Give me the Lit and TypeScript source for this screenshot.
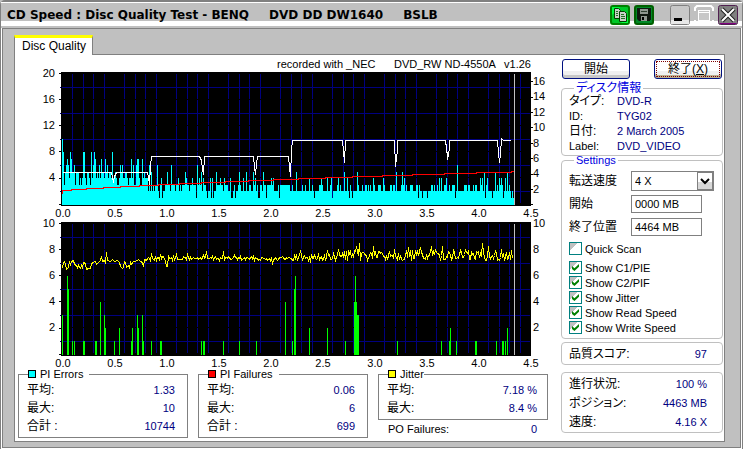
import { LitElement, html, css, svg } from "lit";
import { customElement, property } from "lit/decorators.js";

type Pair = [number, number];

/* Small repeatable generator, so the sampled noise is the same on each load. */
function makeRandom(seed: number) {
  let s = seed;
  return () => {
    s = (s * 1103515245 + 12345) % 2147483648;
    return s / 2147483648;
  };
}

const X0 = 62;
const UNIT = 104;
const TOP1 = 73;
const ZERO1 = 204;
const TOP2 = 223;
const ZERO2 = 354;

const PIE_PEAKS: Pair[] = [
  [62, 10], [63, 8], [64, 3], [66, 6], [67, 7], [68, 6], [70, 8], [71, 7], [74, 6], [78, 5],
  [83, 8], [84, 8], [86, 3], [88, 5], [91, 8], [93, 6], [94, 8], [95, 7], [97, 5], [99, 6],
  [101, 7], [103, 5], [105, 7], [107, 6], [110, 5], [112, 8], [115, 5], [118, 3], [120, 6],
  [122, 6], [126, 5], [128, 3], [131, 7], [133, 6], [136, 6], [137, 7], [138, 7], [140, 3],
  [142, 7], [144, 5], [149, 6], [151, 5], [157, 6], [159, 1], [161, 4], [167, 5], [171, 6],
  [178, 4], [185, 5], [186, 4], [192, 4], [197, 6], [199, 4], [201, 5], [203, 4], [210, 4],
  [212, 4], [216, 5], [220, 4], [224, 4], [230, 4], [235, 1], [239, 5], [243, 4], [246, 5],
  [253, 5], [255, 4], [263, 5], [271, 4], [273, 4], [281, 3], [296, 5], [309, 4], [321, 4],
  [327, 4], [331, 4], [338, 4], [344, 5], [347, 4], [357, 5], [373, 4], [383, 4], [396, 5],
  [402, 5], [404, 4], [439, 4], [441, 4], [446, 4], [457, 6], [480, 4], [482, 4], [484, 5],
  [487, 4], [495, 5], [499, 4], [501, 4], [505, 4], [507, 5], [511, 1], [513, 1], [514, 1],
];

const PIF_BARS: Pair[] = [
  [62, 3], [67, 6], [68, 5], [72, 1], [74, 1], [83, 1], [84, 1], [95, 1], [96, 1], [100, 4],
  [104, 3], [105, 2], [114, 1], [119, 2], [131, 1], [132, 2], [137, 3], [138, 2], [142, 3],
  [143, 1], [151, 1], [160, 1], [161, 1], [201, 1], [203, 1], [204, 1], [223, 1], [239, 1],
  [256, 1], [285, 4], [292, 1], [294, 5], [295, 6], [309, 2], [327, 2], [345, 1], [354, 4],
  [355, 6], [356, 4], [357, 3], [358, 3], [397, 1], [441, 1], [449, 1], [450, 2], [456, 1],
  [475, 1], [476, 1], [496, 1], [502, 1], [503, 1], [505, 1], [507, 2],
];

const JITTER_START: Pair[] = [
  [62, 268], [63, 262], [64, 261], [65, 264], [66, 269], [68, 267], [69, 261], [70, 264],
  [71, 261], [73, 260], [74, 264], [76, 265], [77, 267], [78, 265], [79, 267], [80, 268],
  [81, 265], [82, 267], [83, 262], [85, 263], [86, 269], [88, 268], [90, 268], [91, 264],
  [92, 262], [95, 261], [96, 264], [98, 262], [100, 260], [101, 256], [102, 261], [104, 260],
  [105, 262], [106, 252], [107, 260], [110, 261], [112, 259], [114, 261], [117, 260],
  [119, 262], [120, 266], [122, 268], [123, 267], [124, 261], [125, 262], [126, 267],
  [128, 265], [129, 267], [130, 262], [131, 264], [133, 261], [135, 261], [138, 259],
  [140, 261], [142, 262], [143, 266], [144, 259], [146, 260],
];

const JITTER_PEAKS = new Map<number, number>([
  [151, 253], [160, 254], [166, 266], [167, 266], [176, 254], [187, 254], [203, 254], [206, 251],
  [223, 251], [234, 255], [272, 263], [300, 251], [310, 262], [327, 250], [338, 249], [356, 246],
  [359, 243], [373, 246], [394, 249], [408, 247], [420, 247], [431, 246], [442, 246], [465, 250],
  [482, 243], [488, 246], [501, 249], [508, 258], [510, 259], [512, 258],
]);

const WHITE_LINE =
  "62,172 111,172 113,182 114,176 116,172 147,172 148,177 149,184 150,165 151,156 199,156 " +
  "201,160 202,168 203,174 204,156 253,156 254,166 255,174 256,164 257,156 288,156 289,166 " +
  "290,176 291,150 292,140 342,140 343,150 344,162 345,140 394,140 395,166 397,150 397,140 " +
  "445,140 447,156 447,159 449,148 449,140 497,140 498,152 499,162 500,154 501,138 503,140 510,140";

const RED_STEPS: Pair[] = [
  [62, 190], [71, 189], [86, 188], [103, 187], [120, 186], [139, 185], [158, 184], [179, 183],
  [201, 182], [225, 181], [248, 180], [273, 179], [298, 178], [325, 177], [352, 176],
  [382, 175], [412, 174], [444, 173], [476, 172], [511, 171],
];

function pieHeights(): Pair[] {
  const random = makeRandom(41);
  const peaks = new Map(PIE_PEAKS);
  const out: Pair[] = [];
  for (let x = X0; x <= 514; x++) {
    const r = random();
    let v: number;
    if (x < 128) v = r < 0.2 ? 3 : r < 0.7 ? 4 : 5;
    else if (x < 148) v = r < 0.35 ? 3 : 4;
    else if (x < 290) v = r < 0.5 ? 3 : r < 0.9 ? 2 : 1;
    else v = r < 0.3 ? 3 : r < 0.95 ? 2 : 1;
    out.push([x, peaks.get(x) ?? v]);
  }
  return out;
}

function jitterPoints(): string {
  const random = makeRandom(7);
  const pts: Pair[] = [...JITTER_START];
  for (let x = 147; x <= 512; x++) {
    const low = x < 290 ? 258 : x < 340 ? 257 : 255;
    const amp = x < 290 ? 4 : x < 340 ? 8 : 10;
    const y = Math.round(low + (random() - 0.5) * amp);
    pts.push([x, JITTER_PEAKS.get(x) ?? y]);
  }
  return pts.map((p) => p.join(",")).join(" ");
}

function barPath(bars: Pair[], zero: number, scale: number): string {
  return bars
    .map(([x, v]) => {
      const top = Math.round(zero - v * scale);
      return `M${x} ${zero + 1}V${top}h1V${zero + 1}z`;
    })
    .join("");
}

@customElement("disc-charts")
export class DiscCharts extends LitElement {
  static styles = css`
    :host { display: block; }
    svg { display: block; width: 100%; height: auto; overflow: visible; }
    text { font: 11px "Liberation Sans", Arial, sans-serif; fill: #000; }
    .end { text-anchor: end; }
    .mid { text-anchor: middle; }
    .plot { fill: #000; }
    .grid { stroke: #000080; fill: none; }
    .cols { stroke: #000080; fill: none; stroke-dasharray: 25 1; }
    .tick { stroke: #000; }
    .minor { stroke: #000080; }
    .pie { fill: #0ff; }
    .pif { fill: #0f0; }
    .speed { fill: none; stroke: #fff; }
    .read { fill: none; stroke: #f00; }
    .jitter { fill: none; stroke: #ff0; }
    .marker { stroke: #c0c0c0; }
  `;

  private plot(top: number, zero: number) {
    const columns: number[] = [];
    for (let i = 1; i < 45; i++) if (i % 5 !== 0) columns.push(Math.round(X0 + (i * UNIT) / 10) + 0.5);
    const rows = [14, 40, 66, 92, 118].map((d) => top + d + 0.5);
    const labels = ["0.0", "0.5", "1.0", "1.5", "2.0", "2.5", "3.0", "3.5", "4.0", "4.5"];
    return svg`
      <rect class="plot" x="61" y=${top - 1} width="470" height=${zero - top + 3}></rect>
      <path class="cols" shape-rendering="crispEdges" d=${columns.map((x) => `M${x} ${top + 1}V${zero}`).join("")}></path>
      <path class="grid" shape-rendering="crispEdges" d=${rows.map((y) => `M62 ${y}H530`).join("")}></path>
      <path class="minor" shape-rendering="crispEdges" d=${rows.map((y) => `M60 ${y}h1`).join("")}></path>
      <path class="tick" shape-rendering="crispEdges"
        d=${[0, 26, 52, 78, 105, 131].map((d) => `M59 ${top + d + 0.5}h2`).join("")}></path>
      ${labels.map((t, i) => svg`<text class="mid" x=${63 + i * 52} y=${zero + 13}>${t}</text>`)}`;
  }

  private scale(values: number[], x: number, first: number, step: number, side: string) {
    return values.map(
      (v, i) => svg`<text class=${side} x=${x} y=${Math.round(first + i * step)}>${v}</text>`
    );
  }

  render() {
    const red =
      "62,193 " +
      RED_STEPS.map(([x, y], i) => `${x},${y} ${RED_STEPS[i + 1]?.[0] ?? 513},${y}`).join(" ");
    const rightTicks = [81, 97, 112, 127, 143, 158, 174, 189, 204];
    return html`
      <svg viewBox="15 55 540 312" role="img" aria-label="PI errors, PI failures and jitter over disc position">
        <text x="277" y="68">recorded with _NEC</text>
        <text x="394" y="68">DVD_RW ND-4550A</text>
        <text class="end" x="531" y="68">v1.26</text>
        ${this.plot(TOP1, ZERO1)}
        ${this.scale([20, 16, 12, 8, 4], 55, 77, 26, "end")}
        ${this.scale([16, 14, 12, 10, 8, 6, 4, 2], 533, 85, 15.4, "")}
        <path class="tick" shape-rendering="crispEdges" d=${rightTicks.map((y) => `M531 ${y}.5h2`).join("")}></path>
        <path class="pie" shape-rendering="crispEdges" d=${barPath(pieHeights(), ZERO1, 6.5)}></path>
        <g transform="translate(0.5 0.5)" shape-rendering="crispEdges">
          <polyline class="read" points=${red}></polyline>
          <polyline class="speed" points=${WHITE_LINE}></polyline>
          <line class="marker" x1="514" x2="514" y1=${TOP1} y2=${ZERO1}></line>
        </g>
        ${this.plot(TOP2, ZERO2)}
        ${this.scale([10, 8, 6, 4, 2], 55, 227, 26, "end")}
        ${this.scale([10, 8, 6, 4, 2], 533, 227, 26, "")}
        <path class="pif" shape-rendering="crispEdges" d=${barPath(PIF_BARS, ZERO2, 13)}></path>
        <g transform="translate(0.5 0.5)" shape-rendering="crispEdges">
          <polyline class="jitter" points=${jitterPoints()}></polyline>
          <line class="marker" x1="514" x2="514" y1=${TOP2} y2=${ZERO2}></line>
        </g>
      </svg>`;
  }
}

@customElement("stat-group")
export class StatGroup extends LitElement {
  @property() caption = "";
  @property() tone = "cyan";
  @property({ type: Boolean }) wide = false;
  @property({ attribute: false }) rows: [string, string][] = [];

  static styles = css`
    :host { display: block; }
    fieldset { margin: 0; padding: 0 12px 2px 8px; border: 1px solid #808080; min-width: 0; }
    legend {
      display: flex; align-items: center; gap: 4px; height: 14px; padding: 0; margin-left: 1px;
      background: #fff;
    }
    .wide { padding-right: 10px; }
    .spaced { padding-right: 6px; }
    .swatch { width: 6px; height: 6px; border: 1px solid #000; }
    .cyan { background: #0ff; }
    .red { background: #f00; }
    .yellow { background: #ff0; }
    dl { margin: 0; }
    .row { display: flex; justify-content: space-between; align-items: center; height: 18px; }
    dt { font-size: 12px; font-feature-settings: "palt"; }
    dd { margin: 0; color: #000080; }
  `;

  render() {
    return html`<fieldset class=${this.wide ? "wide" : ""}>
      <legend class=${this.wide ? "" : "spaced"}><span class="swatch ${this.tone}"></span>${this.caption}</legend>
      <dl>
        ${this.rows.map(([k, v]) => html`<div class="row"><dt>${k}</dt><dd>${v}</dd></div>`)}
      </dl>
    </fieldset>`;
  }
}

@customElement("app-root")
export class AppRoot extends LitElement {
  static styles = css`
    :host {
      display: block; color: #000; background: #c0c0c0;
      font: 11px/14px "Liberation Sans", Arial, "Noto Sans CJK JP", sans-serif;
    }
    * { box-sizing: border-box; }
    button, input, select { font: inherit; color: inherit; }
    .window {
      display: flex; flex-direction: column; min-height: 100vh;
      border: 1px solid #808080; border-top-width: 2px; border-radius: 5px 5px 0 0;
      box-shadow: inset 1px 1px #fff, inset -1px -1px #fff;
    }
    .titlebar {
      display: flex; align-items: center; height: 26px; padding: 0 4px 0 6px;
      background: linear-gradient(#fff 1px, #c0c0c0 1px 19px, #fff 19px 24px, #c0c0c0 24px);
    }
    h1 {
      display: flex; gap: 20px; flex: 1; margin: 0; white-space: nowrap;
      font: bold 12px/26px "DejaVu Sans", sans-serif;
    }
    .tools { display: flex; align-items: center; gap: 4px; }
    .tools button { width: 20px; height: 20px; padding: 0; border: 0; background: none; }
    .tools svg { display: block; }
    .tools .min { margin-left: 12px; }
    .body {
      flex: 1; display: flex; flex-direction: column; margin: 0 1px 1px;
      padding: 6px 15px 5px 11px; border: 1px solid #808080;
    }
    .tab {
      align-self: flex-start; position: relative; height: 20px; margin-bottom: -1px; padding: 0 6px 0 7px;
      border: 1px solid #808080; border-top: 3px solid #ff0; border-bottom: 0;
      background: #fff; font-size: 12px; line-height: 15px; border-radius: 0;
    }
    .panel {
      flex: 1; display: grid; grid-template-columns: minmax(0, 1fr) 162px; column-gap: 6px;
      border: 1px solid #808080; background: #fff; padding-right: 1px; align-items: start;
    }
    .stats { display: grid; grid-template-columns: repeat(3, minmax(0, 1fr)); gap: 10px; padding: 0 7px 3px 3px; }
    .po { display: flex; justify-content: space-between; padding: 2px 11px 0 10px; }
    .num { color: #000080; }
    .side { display: flex; flex-direction: column; padding-top: 4px; }
    .actions { display: flex; justify-content: space-between; padding: 0 1px 0 1px; }
    .actions button {
      width: 68px; height: 20px; padding: 0; border: 1px solid #001080; border-radius: 3px;
      background: #fff; box-shadow: inset 0 -3px #c8c8c8, inset 0 -7px #f0f0f0;
      font-size: 12px; line-height: 16px;
    }
    .actions .exit { outline: 1px dotted #800000; outline-offset: -3px; box-shadow: inset 0 -3px #b8b090, inset 0 -7px #f0f0f0; }
    fieldset, .card { margin: 0; min-width: 0; border: 1px solid #c0c0c0; border-radius: 4px; }
    .side legend { height: 14px; margin-left: 5px; padding: 0 2px; color: #0000e0; font-size: 12px; font-feature-settings: "palt"; }
    .side .settings legend { font-size: 11px; }
    .disc { margin-top: 2px; padding: 0 7px 2px; }
    .settings { padding: 2px 7px 3px; margin-top: -3px; }
    dl { margin: 0; }
    .fact { display: flex; height: 15px; align-items: center; }
    .disc dl { margin-top: -2px; }
    .fact dt { width: 48px; }
    dt, .ja { font-size: 12px; font-feature-settings: "palt"; }
    dt.en { font-size: 11px; }
    dd { margin: 0; color: #000080; }
    .field { display: flex; align-items: center; height: 23px; }
    .field label { width: 62px; font-size: 12px; }
    .field input {
      width: 71px; height: 18px; padding: 0 3px; border: 1px solid #808080; border-radius: 0; background: #fff;
    }
    .picker { position: relative; width: 83px; height: 20px; }
    .picker select {
      width: 100%; height: 100%; appearance: none; padding: 0 3px; border: 1px solid #808080;
      border-radius: 0; background: #fff;
    }
    .picker svg { position: absolute; top: 0; right: 0; pointer-events: none; }
    .check { display: flex; align-items: center; gap: 3px; height: 15px; }
    .check.first { margin: 3px 0 4px; }
    .check input {
      appearance: none; flex: none; width: 13px; height: 13px; margin: 0; border: 1px solid #008080;
      background: linear-gradient(135deg, #c0c0c0 35%, #fff 35%);
    }
    .check input:checked::before {
      content: ""; display: block; width: 7px; height: 7px; margin: 2px; background: #008000;
      clip-path: polygon(0 30%, 35% 60%, 100% 0, 100% 38%, 35% 100%, 0 70%);
    }
    .card { padding: 1px 15px 1px 7px; }
    .card .row { display: flex; justify-content: space-between; align-items: center; height: 19px; }
    .score { margin-top: 3px; }
    .progress { margin-top: 7px; }
  `;

  private check(id: string, label: string, on: boolean, first = false) {
    return html`<div class="check ${first ? "first" : ""}">
      <input type="checkbox" id=${id} ?checked=${on} /><label for=${id}>${label}</label>
    </div>`;
  }

  render() {
    return html`
      <div class="window">
        <header class="titlebar">
          <h1><span>CD Speed : Disc Quality Test - BENQ</span><span>DVD DD DW1640</span><span>BSLB</span></h1>
          <div class="tools">
            <button aria-label="Copy">
              <svg width="20" height="20">
                <rect x="1" y="1" width="18" height="18" rx="2" fill="#00c828" stroke="#008000" stroke-width="2" />
                <path d="M2 2h8L2 10zM18 12v6h-7z" fill="#00ff40" />
                <path d="M4.500 3.500h4l2 2v8h-6z" fill="#c8d0c8" stroke="#004000" />
                <path d="M9.500 6.500h5l2 2v8h-7z" fill="#c8d0c8" stroke="#004000" />
                <path d="M11 9.500h3M11 11.500h4M11 13.500h4M6 6.500h2M6 8.500h2M6 10.500h2" stroke="#207020" />
              </svg>
            </button>
            <button aria-label="Save">
              <svg width="20" height="20">
                <rect x="1" y="1" width="18" height="18" rx="2" fill="#008828" stroke="#006000" stroke-width="2" />
                <path d="M3 3h14v12h-1v1H5l-2-2z" fill="#101810" />
                <path d="M6 4h8v5H6zM7 11h6v5H7z" fill="#909890" />
                <path d="M7 6.500h6" stroke="#304030" />
                <rect x="8" y="12" width="2" height="3" fill="#000" />
              </svg>
            </button>
            <button class="min" aria-label="Minimize">
              <svg width="20" height="20">
                <rect x="0.500" y="0.500" width="19" height="19" rx="2" fill="#c8c8c8" stroke="#808080" />
                <path d="M1 15h18v4H1z" fill="#e8e8e8" />
                <rect x="4" y="13" width="8" height="3" fill="#000" />
              </svg>
            </button>
            <button aria-label="Maximize">
              <svg width="20" height="20">
                <path d="M1 6V3l2-2h14l2 2v3M1 15v3l2 1h14l2-1v-3" fill="none" stroke="#fff" stroke-width="2" />
                <rect x="4.500" y="5.500" width="11" height="10" fill="#c8c8c8" stroke="#fff" />
                <path d="M4 7.500h12" stroke="#fff" />
              </svg>
            </button>
            <button aria-label="Close">
              <svg width="20" height="20">
                <rect x="0.500" y="0.500" width="19" height="19" rx="2" fill="#808080" stroke="#502050" />
                <path d="M2 18.500h16" stroke="#800080" />
                <path d="M4 4l12 12M16 4L4 16" stroke="#202020" stroke-width="4" />
                <path d="M4 4l12 12M16 4L4 16" stroke="#fff" stroke-width="2" />
              </svg>
            </button>
          </div>
        </header>
        <main class="body">
          <button class="tab" role="tab" aria-selected="true">Disc Quality</button>
          <div class="panel">
            <section>
              <disc-charts></disc-charts>
              <div class="stats">
                <stat-group caption="PI Errors" tone="cyan"
                  .rows=${[["平均:", "1.33"], ["最大:", "10"], ["合計 :", "10744"]]}></stat-group>
                <stat-group caption="PI Failures" tone="red"
                  .rows=${[["平均:", "0.06"], ["最大:", "6"], ["合計 :", "699"]]}></stat-group>
                <div>
                  <stat-group caption="Jitter" tone="yellow" wide
                    .rows=${[["平均:", "7.18 %"], ["最大:", "8.4 %"]]}></stat-group>
                  <div class="po"><span>PO Failures:</span><span class="num">0</span></div>
                </div>
              </div>
            </section>
            <aside class="side">
              <div class="actions">
                <button>開始</button>
                <button class="exit">終了(<u>X</u>)</button>
              </div>
              <fieldset class="disc">
                <legend>ディスク情報</legend>
                <dl>
                  <div class="fact"><dt>タイプ:</dt><dd>DVD-R</dd></div>
                  <div class="fact"><dt class="en">ID:</dt><dd>TYG02</dd></div>
                  <div class="fact"><dt>日付:</dt><dd>2 March 2005</dd></div>
                  <div class="fact"><dt class="en">Label:</dt><dd>DVD_VIDEO</dd></div>
                </dl>
              </fieldset>
              <fieldset class="settings">
                <legend>Settings</legend>
                <div class="field">
                  <label for="speed">転送速度</label>
                  <div class="picker">
                    <select id="speed"><option>4 X</option></select>
                    <svg width="18" height="20">
                      <rect x="1.500" y="1.500" width="15" height="17" fill="#fff" stroke="#808080" />
                      <path d="M2 11h14v7H2z" fill="#d8d8d8" />
                      <path d="M5 8l4 4 4-4" fill="none" stroke="#000" stroke-width="2" />
                    </svg>
                  </div>
                </div>
                <div class="field"><label for="from">開始</label><input id="from" value="0000 MB" /></div>
                <div class="field"><label for="to">終了位置</label><input id="to" value="4464 MB" /></div>
                ${this.check("quick", "Quick Scan", false, true)}
                ${this.check("c1", "Show C1/PIE", true)}
                ${this.check("c2", "Show C2/PIF", true)}
                ${this.check("jit", "Show Jitter", true)}
                ${this.check("rs", "Show Read Speed", true)}
                ${this.check("ws", "Show Write Speed", true)}
              </fieldset>
              <div class="card score">
                <div class="row"><span class="ja">品質スコア:</span><span class="num">97</span></div>
              </div>
              <div class="card progress">
                <div class="row"><span class="ja">進行状況:</span><span class="num">100 %</span></div>
                <div class="row"><span class="ja">ポジション:</span><span class="num">4463 MB</span></div>
                <div class="row"><span class="ja">速度:</span><span class="num">4.16 X</span></div>
              </div>
            </aside>
          </div>
        </main>
      </div>`;
  }
}
